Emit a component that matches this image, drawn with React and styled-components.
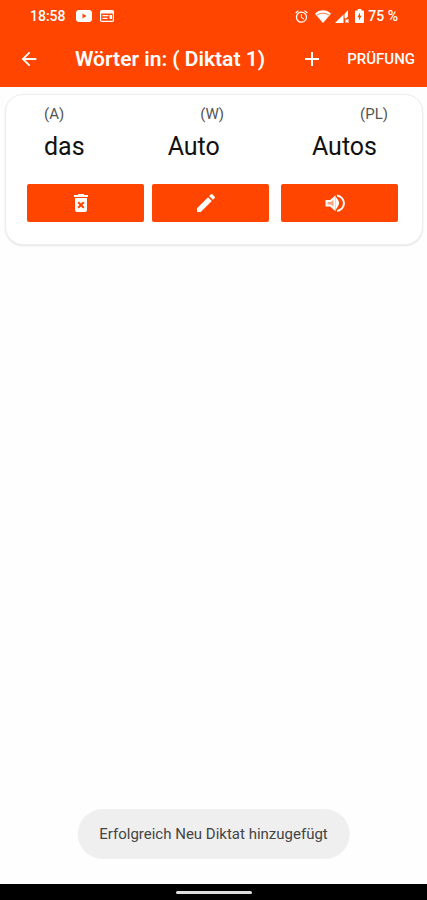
import React from 'react';
import styled, { createGlobalStyle } from 'styled-components';
import {
  MdAdd,
  MdAlarm,
  MdArrowBack,
  MdDeleteForever,
  MdEdit,
} from 'react-icons/md';

const YoutubeIcon = () => (
  <svg width="16" height="12" viewBox="0 0 16 12" fill="#fff" aria-hidden="true">
    <path fillRule="evenodd" d="M3 0h10a3 3 0 0 1 3 3v6a3 3 0 0 1-3 3H3a3 3 0 0 1-3-3V3a3 3 0 0 1 3-3zm3.500 3.500v5L10.500 6z" />
  </svg>
);

const NewsIcon = () => (
  <svg width="14" height="12" viewBox="0 0 14 12" aria-hidden="true">
    <rect x="0.600" y="0.600" width="12.800" height="10.800" rx="1" fill="none" stroke="#fff" strokeWidth="1.200" />
    <path fill="#fff" d="M1 1h12v2.400H1zM2.500 5h6v1.200h-6zM2.500 7.800h5v1.200h-5zM9.500 5h2.500v4H9.500z" />
  </svg>
);

const WifiIcon = () => (
  <svg width="16" height="13" viewBox="0 0 16 13" aria-hidden="true">
    <path fill="#fff" d="M0 3.700C4.500-.9 11.500-.9 16 3.700L8 13z" />
    <path fill="none" stroke="#ff4500" strokeWidth="0.700" d="M2 5q6-3.600 12 0" />
  </svg>
);

const SignalIcon = () => (
  <svg width="14" height="13" viewBox="0 0 14 13" aria-hidden="true">
    <path fill="#fff" d="M0 13L8.500 4.500V13z" />
    <path fill="#fff" d="M9.500 4L13 0v6.500l-2 2-1.500-.5zM10 10l1-1 1 1 1-1 1 1-1 1 1 1-1 1-1-1-1 1-1-1 1-1z" />
  </svg>
);

const BatteryIcon = () => (
  <svg width="9" height="14" viewBox="0 0 9 14" aria-hidden="true">
    <path fill="#fff" fillRule="evenodd" d="M2.700 0h3.600v1.400H8a1 1 0 0 1 1 1V13a1 1 0 0 1-1 1H1a1 1 0 0 1-1-1V2.400a1 1 0 0 1 1-1h1.700zM5 3.500L2.400 8.300H4v3.200l2.600-4.700H5z" />
  </svg>
);

const SpeakerIcon = () => (
  <svg width="24" height="24" viewBox="0 0 24 24" fill="none" stroke="#fff" strokeWidth="2" aria-hidden="true">
    <path fill="#fff" fillOpacity="0.500" d="M3.500 10v4.500H7.500L11.500 18V6.500L7.500 10z" />
    <path d="M13.500 8.500q3 3.700 0 7.500zM14 4.500a7.800 7.800 0 0 1 0 15.500" />
  </svg>
);

const App = () => {
  return (
    <>
      <GlobalStyle />
      <Screen>
        <Header>
          <StatusBar>
            <StatusGroup $gap="8px">
              <Clock>18:58</Clock>
              <YoutubeIcon />
              <NewsIcon />
            </StatusGroup>
            <StatusGroup $gap="4px">
              <AlarmSlot>
                <MdAlarm size={15} />
              </AlarmSlot>
              <WifiIcon />
              <SignalIcon />
              <BatterySlot>
                <BatteryIcon />
              </BatterySlot>
              <span>75 %</span>
            </StatusGroup>
          </StatusBar>
          <Toolbar>
            <IconButton type="button" aria-label="Zurück">
              <MdArrowBack size={22} />
            </IconButton>
            <Title>Wörter in: ( Diktat 1)</Title>
            <IconButton type="button" aria-label="Hinzufügen">
              <MdAdd size={24} />
            </IconButton>
            <TextButton type="button">PRÜFUNG</TextButton>
          </Toolbar>
        </Header>

        <Content>
          <Card>
            <Labels>
              <span>(A)</span>
              <span>(W)</span>
              <span>(PL)</span>
            </Labels>
            <Words>
              <span>das</span>
              <span>Auto</span>
              <span>Autos</span>
            </Words>
            <Actions>
              <ActionButton type="button" aria-label="Löschen">
                <MdDeleteForever size={24} />
              </ActionButton>
              <ActionButton type="button" aria-label="Bearbeiten">
                <MdEdit size={24} />
              </ActionButton>
              <ActionButton type="button" aria-label="Anhören">
                <SpeakerIcon />
              </ActionButton>
            </Actions>
          </Card>
          <Toast role="status">Erfolgreich Neu Diktat hinzugefügt</Toast>
        </Content>

        <NavBar>
          <NavHandle />
        </NavBar>
      </Screen>
    </>
  );
};

const GlobalStyle = createGlobalStyle`
  * {
    box-sizing: border-box;
  }

  body {
    margin: 0;
    background: #fefefe;
    font-family: Roboto, "Liberation Sans", sans-serif;
  }

  button {
    border: 0;
    padding: 0;
    color: inherit;
    background: none;
    font: inherit;
    cursor: pointer;
  }

  svg {
    display: block;
    flex: none;
  }
`;

const Screen = styled.div`
  min-height: 100vh;
  display: flex;
  flex-direction: column;
`;

const Header = styled.header`
  background: #ff4500;
  color: #fff;
`;

const StatusBar = styled.div`
  height: 32px;
  padding: 0 29px 0 30px;
  display: flex;
  align-items: center;
  justify-content: space-between;
  font-size: 14px;
  font-weight: 500;
`;

const StatusGroup = styled.div`
  display: flex;
  align-items: center;
  gap: ${({ $gap }) => $gap};
`;

const Clock = styled.time`
  margin-right: 2px;
`;

const AlarmSlot = styled.span`
  margin-right: 2px;
`;

const BatterySlot = styled.span`
  margin-left: 2px;
`;

const Toolbar = styled.div`
  height: 55px;
  padding: 0 12px 2px 18px;
  display: flex;
  align-items: center;
`;

const IconButton = styled.button`
  display: flex;
`;

const Title = styled.h1`
  flex: 1;
  margin: 0 0 0 35px;
  font-size: 21px;
  font-weight: 600;
  line-height: 24px;
  white-space: nowrap;
`;

const TextButton = styled.button`
  && {
    margin-left: 23px;
    font-size: 15px;
    font-weight: 500;
  }
`;

const Content = styled.main`
  flex: 1;
  position: relative;
  padding: 7px 4px 0 5px;
`;

const Card = styled.section`
  padding: 10px 24px 22px 21px;
  border: 1px solid #eee;
  border-radius: 18px;
  background: #fff;
  box-shadow: 0 1px 2px rgba(0, 0, 0, 0.1);
`;

const Labels = styled.div`
  padding: 0 10px 0 17px;
  display: flex;
  justify-content: space-between;
  color: #555;
  font-size: 15px;
  line-height: 18px;
`;

const Words = styled.div`
  margin-top: 8px;
  padding: 0 21px 0 17px;
  display: grid;
  grid-template-columns: 6fr 7fr auto;
  color: #111;
  font-size: 25px;
  line-height: 32px;
`;

const Actions = styled.div`
  margin-top: 21px;
  display: flex;
  gap: 8px;
`;

const ActionButton = styled.button`
  flex: 1;
  height: 38px;
  && {
    padding-right: 10px;
    background: #ff4500;
  }
  display: flex;
  align-items: center;
  justify-content: center;
  border-radius: 2px;
  color: #fff;

  &:last-child {
    margin-left: 4px;
  }
`;

const Toast = styled.div`
  position: absolute;
  left: 50%;
  bottom: 25px;
  transform: translateX(-50%);
  padding: 16px 22px;
  border-radius: 25px;
  background: #efefef;
  color: #444;
  font-size: 15px;
  line-height: 18px;
  white-space: nowrap;
`;

const NavBar = styled.footer`
  height: 16px;
  display: flex;
  align-items: center;
  justify-content: center;
  background: #000;
`;

const NavHandle = styled.div`
  width: 76px;
  height: 3px;
  border-radius: 2px;
  background: #ddd;
`;

export default App;
